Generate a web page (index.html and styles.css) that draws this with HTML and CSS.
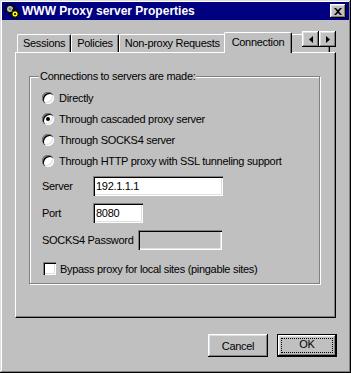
FILE: index.html
```html
<!DOCTYPE html>
<html lang="en">
<head>
    <meta charset="UTF-8" />
    <title>WWW Proxy server Properties</title>
    <link rel="stylesheet" href="styles.css">
</head>
<body>
    <div class="window">
        <!-- title bar -->
        <div class="titlebar">
            <svg class="app-icon" width="16" height="16" viewBox="0 0 16 16">
                <circle cx="6" cy="6" r="4.6" fill="none" stroke="#000" stroke-width="2.6" stroke-dasharray="1.8 1.8"/>
                <circle cx="6" cy="6" r="3.6" fill="#c0c0c0" stroke="#000" stroke-width="1"/>
                <circle cx="6" cy="6" r="1.3" fill="#808080"/>
                <circle cx="11" cy="11" r="4.1" fill="none" stroke="#000" stroke-width="2.4" stroke-dasharray="1.6 1.6"/>
                <circle cx="11" cy="11" r="3.2" fill="#ffff00" stroke="#000" stroke-width="1"/>
                <circle cx="11" cy="11" r="1.1" fill="#000"/>
            </svg>
            <span class="title">WWW Proxy server Properties</span>
            <button class="close-btn">
                <svg width="8" height="7" viewBox="0 0 8 7">
                    <path d="M0 0h2l2 2 2-2h2L5 3.5 8 7H6L4 5 2 7H0l3-3.5z" fill="#000"/>
                </svg>
            </button>
        </div>

        <div class="content">
            <!-- tabs -->
            <div class="tabstrip">
                <div class="tabs">
                    <div class="tab">Sessions</div>
                    <div class="tab">Policies</div>
                    <div class="tab">Non-proxy Requests</div>
                    <div class="tab selected">Connection</div>
                    <div class="tab more"></div>
                </div>
                <div class="tab-scroll">
                    <button class="scroll-btn">
                        <svg width="4" height="7" viewBox="0 0 4 7"><path d="M4 0v7L0 3.5z" fill="#000"/></svg>
                    </button>
                    <button class="scroll-btn">
                        <svg width="4" height="7" viewBox="0 0 4 7"><path d="M0 0v7l4-3.5z" fill="#000"/></svg>
                    </button>
                </div>
            </div>

            <!-- page -->
            <div class="panel">
                <div class="group">
                    <span class="legend">Connections to servers are made:</span>
                    <div class="radios">
                        <div class="radio-row"><span class="radio"></span>Directly</div>
                        <div class="radio-row"><span class="radio checked"></span>Through cascaded proxy server</div>
                        <div class="radio-row"><span class="radio"></span>Through SOCKS4 server</div>
                        <div class="radio-row"><span class="radio"></span>Through HTTP proxy with SSL tunneling support</div>
                    </div>
                    <div class="fields">
                        <div class="field-row">
                            <span class="field-label">Server</span>
                            <span class="textbox server-box">192.1.1.1</span>
                        </div>
                        <div class="field-row">
                            <span class="field-label">Port</span>
                            <span class="textbox port-box">8080</span>
                        </div>
                        <div class="field-row">
                            <span class="field-label">SOCKS4 Password</span>
                            <span class="textbox pass-box disabled"></span>
                        </div>
                    </div>
                    <div class="check-row"><span class="checkbox"></span>Bypass proxy for local sites (pingable sites)</div>
                </div>
            </div>

            <!-- buttons -->
            <div class="actions">
                <button class="btn">Cancel</button>
                <button class="btn default"><span class="focus">OK</span></button>
            </div>
        </div>
    </div>
</body>
</html>
```

FILE: styles.css
```css
*{box-sizing:border-box;}
body{
    margin:0;background:#c0c0c0;color:#000;
    font-family:"Liberation Sans",Arial,sans-serif;font-size:11px;letter-spacing:-0.3px;
}
button{font-family:inherit;font-size:inherit;letter-spacing:inherit;color:#000;}

/* window frame */
.window{
    width:351px;height:373px;padding:2px;background:#c0c0c0;
    display:flex;flex-direction:column;
    box-shadow:inset -1px -1px #000,inset 1px 1px #dfdfdf,
               inset -2px -2px #808080,inset 2px 2px #fff;
}
.titlebar{
    height:18px;background:#000080;color:#fff;
    display:flex;align-items:center;padding:0 3px 0 2px;
}
.app-icon{flex:none;}
.title{margin-left:2px;font-weight:bold;font-size:12px;letter-spacing:0;}
.close-btn{
    margin-left:auto;width:16px;height:14px;padding:0;border:none;
    background:#c0c0c0;display:flex;align-items:center;justify-content:center;
    box-shadow:inset -1px -1px #000,inset 1px 1px #fff,
               inset -2px -2px #808080,inset 2px 2px #dfdfdf;
}

.content{flex:1;display:flex;flex-direction:column;padding:12px 13px 0 13px;}

/* tabs */
.tabstrip{position:relative;z-index:1;height:21px;margin-bottom:-1px;}
.tabs{display:flex;align-items:flex-end;height:21px;padding-left:2px;overflow:hidden;}
.tab{
    flex:none;height:18px;margin-bottom:1px;padding:0 5px;line-height:16px;
    white-space:nowrap;background:#c0c0c0;
    border-top:1px solid #fff;border-left:1px solid #fff;border-right:1px solid #000;
    border-radius:2px 2px 0 0;
    box-shadow:inset -1px 0 #808080;
}
.tab.selected{
    position:relative;height:21px;margin:0 -2px;padding:0 7px;line-height:18px;
}
.tab.more{width:40px;}
.tab-scroll{position:absolute;top:-1px;right:0;display:flex;}
.scroll-btn{
    width:17px;height:16px;padding:0;border:none;background:#c0c0c0;
    display:flex;align-items:center;justify-content:center;
    box-shadow:inset -1px -1px #000,inset 1px 1px #fff,
               inset -2px -2px #808080,inset 2px 2px #dfdfdf;
}

.panel{
    height:266px;padding:23px 15px 0 13px;
    border:1px solid;border-color:#fff #000 #000 #fff;
    box-shadow:inset -1px -1px #808080;
}

/* group box */
.group{
    position:relative;height:208px;padding:10px 0 0 12px;
    border:1px solid #808080;
    box-shadow:inset 1px 1px #fff,1px 1px #fff;
}
.legend{
    position:absolute;top:-7px;left:9px;padding:0 1px;
    line-height:13px;background:#c0c0c0;
}
.radio-row{display:flex;align-items:center;height:21px;gap:5px;}
.radio{
    position:relative;flex:none;width:12px;height:12px;border-radius:50%;background:#fff;
    box-shadow:inset 1px 1px #808080,inset 2px 2px #000,inset -1px -1px #fff,inset -2px -2px #dfdfdf;
}
.radio.checked::after{
    content:"";position:absolute;left:4px;top:4px;width:4px;height:4px;
    border-radius:50%;background:#000;
}

.fields{display:flex;flex-direction:column;gap:7px;margin-top:5px;}
.field-row{display:flex;align-items:center;}
.field-label{min-width:51px;padding-right:5px;white-space:nowrap;}
.textbox{
    height:20px;padding:0 3px;line-height:20px;background:#fff;
    box-shadow:inset 1px 1px #808080,inset 2px 2px #000,inset -1px -1px #fff,inset -2px -2px #dfdfdf;
}
.textbox.disabled{background:#c0c0c0;}
.server-box{width:130px;}
.port-box{width:50px;}
.pass-box{width:84px;}

.check-row{display:flex;align-items:center;gap:4px;margin-top:12px;margin-left:1px;}
.checkbox{
    flex:none;width:13px;height:13px;background:#fff;
    box-shadow:inset 1px 1px #808080,inset 2px 2px #000,inset -1px -1px #fff,inset -2px -2px #dfdfdf;
}

/* dialog buttons */
.actions{display:flex;justify-content:flex-end;gap:9px;margin:16px -1px 0 0;}
.btn{
    width:60px;height:23px;padding:0;border:none;background:#c0c0c0;
    box-shadow:inset -1px -1px #000,inset 1px 1px #fff,
               inset -2px -2px #808080,inset 2px 2px #dfdfdf;
}
.btn.default{
    padding:4px;border:1px solid #000;
    box-shadow:inset -1px -1px #000,inset 1px 1px #fff,
               inset -2px -2px #808080,inset 2px 2px #dfdfdf;
}
.btn.default .focus{
    display:block;height:100%;line-height:11px;outline:1px dotted #000;
}
```
